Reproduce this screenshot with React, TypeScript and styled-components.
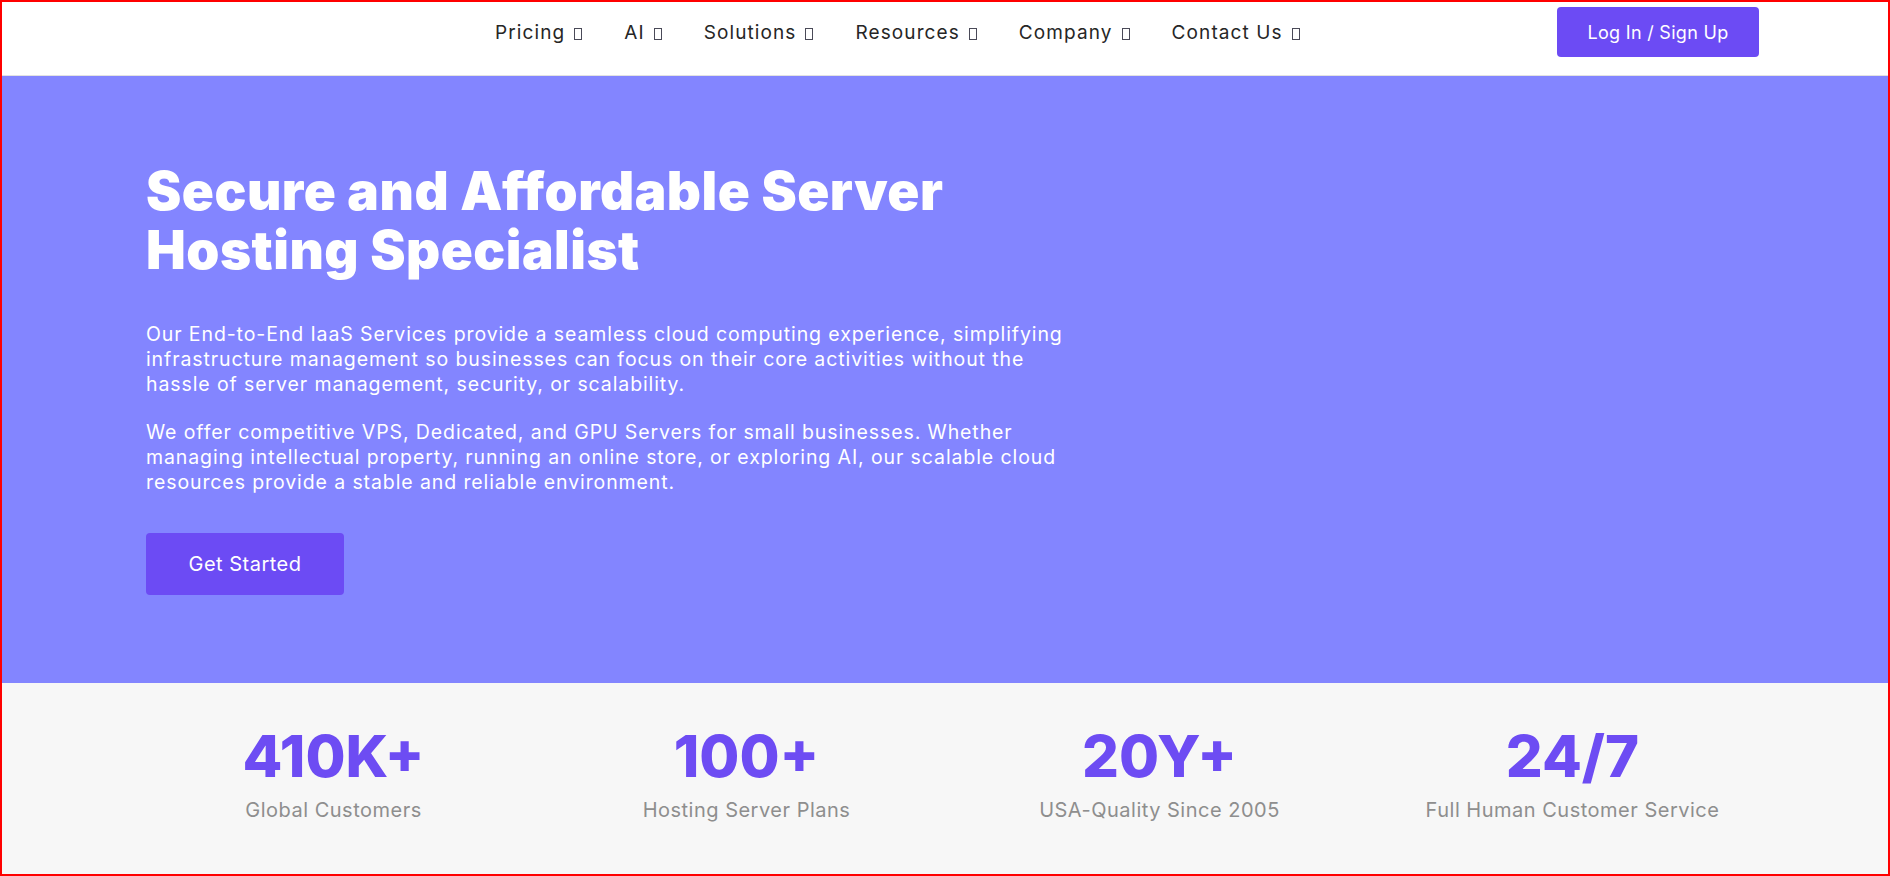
import React from "react";
import styled, { createGlobalStyle } from "styled-components";

const Global = createGlobalStyle`
  html, body { margin: 0; padding: 0; }
  body { font-family: "Inter", "Open Sans", sans-serif; background: #fff; }
  * { box-sizing: border-box; }
`;

const Frame = styled.div`
  width: 1890px;
  height: 876px;
  border: 2px solid #ff0000;
  overflow: hidden;
  display: flex;
  flex-direction: column;
`;

const Nav = styled.header`
  height: 74px;
  flex: none;
  display: flex;
  align-items: flex-start;
  border-bottom: 1px solid #e2e2e2;
  padding: 5px 129px 0 493px;
`;

const Menu = styled.nav`
  display: flex;
  align-items: center;
  height: 50px;
  gap: 42px;
  flex: 1;
`;

const MenuItem = styled.a`
  font-size: 19px;
  font-weight: 400;
  letter-spacing: 1.1px;
  color: #262626;
  display: flex;
  align-items: center;
  gap: 9px;
  cursor: pointer;
`;

const Tofu = styled.span`
  width: 8px;
  height: 12px;
  margin-top: 3px;
  border: 1px solid #4a4a58;
`;

const LoginButton = styled.button`
  width: 202px;
  height: 50px;
  border: none;
  border-radius: 4px;
  background: #6c4bf4;
  color: #fff;
  font-family: inherit;
  font-size: 18px;
  letter-spacing: 0.3px;
  cursor: pointer;
`;

const Hero = styled.section`
  height: 607px;
  flex: none;
  background: #8385ff;
  padding: 86px 0 0 144px;
  color: #fff;
`;

const Title = styled.h1`
  margin: 0 0 42px;
  font-size: 53px;
  font-weight: 900;
  letter-spacing: 0.5px;
  line-height: 59px;
`;

const Lead = styled.p`
  margin: 0 0 23px;
  width: 935px;
  font-size: 19.5px;
  letter-spacing: 0.9px;
  line-height: 25px;
  &:last-of-type { margin-bottom: 38px; }
`;

const CtaButton = styled.button`
  width: 198px;
  height: 62px;
  border: none;
  border-radius: 4px;
  background: #6c4bf4;
  color: #fff;
  font-family: inherit;
  font-size: 20px;
  letter-spacing: 0.5px;
  cursor: pointer;
`;

const Stats = styled.section`
  flex: 1;
  background: #f7f7f7;
  padding: 44px 0 0 125px;
  display: grid;
  grid-template-columns: repeat(4, 413px);
  align-content: start;
`;

const Stat = styled.div`
  display: flex;
  flex-direction: column;
  align-items: center;
  gap: 13px;
`;

const Figure = styled.div`
  font-size: 58px;
  font-weight: 800;
  line-height: 58px;
  color: #6d4cf3;
`;

const Label = styled.div`
  font-size: 20px;
  letter-spacing: 0.5px;
  line-height: 24px;
  color: #8e8e8e;
`;

const menu = ["Pricing", "AI", "Solutions", "Resources", "Company", "Contact Us"];
const stats = [
  ["410K+", "Global Customers"],
  ["100+", "Hosting Server Plans"],
  ["20Y+", "USA-Quality Since 2005"],
  ["24/7", "Full Human Customer Service"],
];

export default function App() {
  return (
    <Frame>
      <Global />
      <Nav>
        <Menu>
          {menu.map((m) => (
            <MenuItem key={m}>
              {m}
              <Tofu />
            </MenuItem>
          ))}
        </Menu>
        <LoginButton>Log In / Sign Up</LoginButton>
      </Nav>
      <Hero>
        <Title>
          Secure and Affordable Server
          <br />
          Hosting Specialist
        </Title>
        <Lead>
          Our End-to-End IaaS Services provide a seamless cloud computing experience, simplifying
          infrastructure management so businesses can focus on their core activities without the
          hassle of server management, security, or scalability.
        </Lead>
        <Lead>
          We offer competitive VPS, Dedicated, and GPU Servers for small businesses. Whether
          managing intellectual property, running an online store, or exploring AI, our scalable
          cloud resources provide a stable and reliable environment.
        </Lead>
        <CtaButton>Get Started</CtaButton>
      </Hero>
      <Stats>
        {stats.map(([n, l]) => (
          <Stat key={n}>
            <Figure>{n}</Figure>
            <Label>{l}</Label>
          </Stat>
        ))}
      </Stats>
    </Frame>
  );
}
